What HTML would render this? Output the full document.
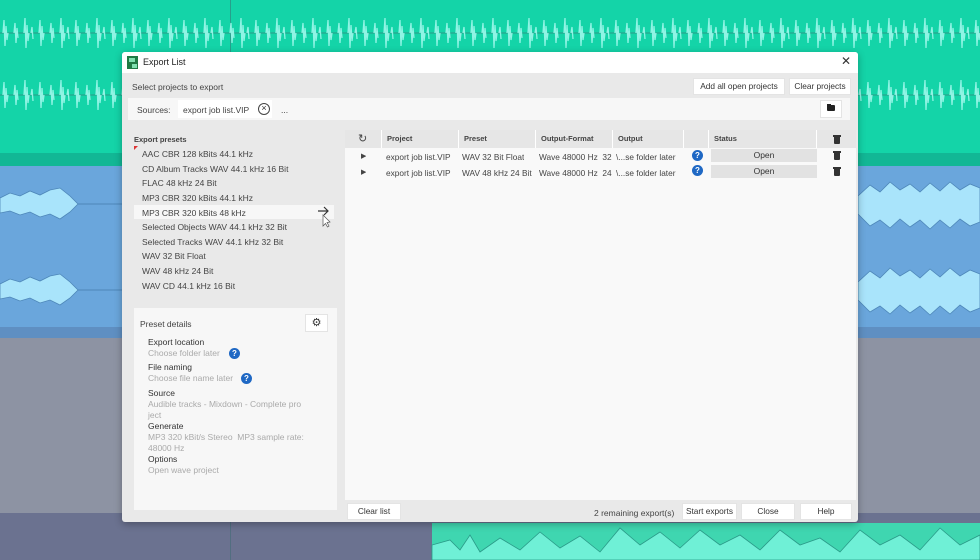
<!DOCTYPE html>
<html><head><meta charset="utf-8"><style>
*{margin:0;padding:0;box-sizing:border-box}
body{width:980px;height:560px;overflow:hidden;position:relative;font-family:"Liberation Sans",sans-serif;font-size:8.5px;color:#333;background:#8d93a3}
.a{position:absolute}
.btn{position:absolute;background:#fff;border:1px solid #e4e4e4;text-align:center;height:17px;line-height:15px;font-size:8.3px;color:#333}
.li{position:absolute;left:142px;font-size:8.5px;color:#444}
.th{position:absolute;top:130px;height:18px;line-height:18px;font-size:7.5px;font-weight:bold;color:#444;border-right:1px solid #fff;padding-left:5px}
.td{position:absolute;font-size:8.3px;color:#444;white-space:nowrap;overflow:hidden}
.q{position:absolute;width:11px;height:11px;border-radius:50%;background:#1f68c4;color:#fff;font-size:8px;font-weight:bold;text-align:center;line-height:11px}
.dh{position:absolute;left:148px;font-size:8.5px;color:#333}
.dv{position:absolute;left:148px;font-size:8.5px;color:#aaa}
.tr{position:absolute;width:6px;height:7px;background:#333;border-radius:0 0 1px 1px}
.tr:before{content:"";position:absolute;left:-1px;top:-2px;width:8px;height:1.5px;background:#333}
</style></head><body>
<div class="a" style="left:0;top:0;width:980px;height:153px;background:#14d4a8"></div>
<div class="a" style="left:0;top:153px;width:980px;height:13px;background:#12b795"></div>
<div class="a" style="left:0;top:166px;width:980px;height:161px;background:#6aa6dc"></div>
<div class="a" style="left:0;top:327px;width:980px;height:11px;background:#5f8fc2"></div>
<div class="a" style="left:0;top:513px;width:980px;height:47px;background:#6b7290"></div>
<div class="a" style="left:432px;top:523px;width:548px;height:37px;background:#3fd6b0"></div>
<div class="a" style="left:230px;top:0;width:1px;height:560px;background:#3a6a70;opacity:.5"></div>
<svg class="a" style="left:0;top:0" width="980" height="560">
<defs>
<pattern id="sp1" x="0" y="8" width="36" height="50" patternUnits="userSpaceOnUse">
<line x1="0" y1="25" x2="36" y2="25" stroke="#2a9a88" stroke-width="1"/>
<path d="M3 25 L4 12 L5 38 L6 18 L7 32 L8 25 M14 25 L15 15 L16 35 L17 20 L18 30 M24 25 L25 10 L26 40 L27 17 L28 33 L29 25 M31 25 L32 19 L33 31" stroke="#8ff4e4" stroke-width="1.3" fill="none"/>
</pattern>
<pattern id="sp2" x="0" y="70" width="36" height="50" patternUnits="userSpaceOnUse">
<line x1="0" y1="25" x2="36" y2="25" stroke="#2a9a88" stroke-width="1"/>
<path d="M3 25 L4 12 L5 38 L6 18 L7 32 L8 25 M14 25 L15 15 L16 35 L17 20 L18 30 M24 25 L25 10 L26 40 L27 17 L28 33 L29 25 M31 25 L32 19 L33 31" stroke="#8ff4e4" stroke-width="1.3" fill="none"/>
</pattern>
</defs>
<rect x="0" y="8" width="980" height="50" fill="url(#sp1)"/>
<rect x="0" y="70" width="980" height="50" fill="url(#sp2)"/>
<g fill="#a9e4fb" stroke="#4d86b8" stroke-width=".8">
<path d="M0 198 L10 193 L20 196 L30 191 L40 195 L50 190 L60 188 L70 196 L78 204 L70 212 L60 219 L50 214 L40 217 L30 212 L20 215 L10 211 L0 213Z"/>
<path d="M0 284 L10 279 L20 282 L30 277 L40 281 L50 276 L60 274 L70 282 L78 290 L70 298 L60 305 L50 300 L40 303 L30 298 L20 301 L10 297 L0 299Z"/>
<path d="M858 196 L870 185 L880 192 L890 182 L900 190 L910 184 L920 192 L930 183 L940 191 L950 182 L960 190 L970 184 L980 188 L980 222 L970 226 L960 219 L950 228 L940 220 L930 229 L920 220 L910 227 L900 219 L890 228 L880 220 L870 226 L858 214Z"/>
<path d="M858 282 L870 271 L880 278 L890 268 L900 276 L910 270 L920 278 L930 269 L940 277 L950 268 L960 276 L970 270 L980 274 L980 308 L970 312 L960 305 L950 314 L940 306 L930 315 L920 306 L910 313 L900 305 L890 314 L880 306 L870 312 L858 300Z"/>
</g>
<line x1="78" y1="204" x2="122" y2="204" stroke="#4d86b8"/>
<line x1="78" y1="290" x2="122" y2="290" stroke="#4d86b8"/>
<path d="M432 560 L432 545 L450 540 L460 550 L470 535 L480 552 L500 538 L520 550 L540 532 L560 548 L580 536 L600 552 L620 528 L640 545 L660 532 L680 548 L700 530 L720 545 L740 535 L760 550 L780 530 L800 545 L820 538 L840 552 L860 530 L880 545 L900 535 L920 550 L940 528 L960 545 L980 535 L980 560Z" fill="#6ff0d6" stroke="#2a9a88" stroke-width=".8"/>
</svg>

<div class="a" style="left:122px;top:52px;width:736px;height:470px;background:#e9e9e9;box-shadow:0 2px 8px rgba(0,0,0,.3);border-radius:3px;overflow:hidden">
<div class="a" style="left:0;top:0;width:736px;height:21px;background:#fff"></div>
</div>
<div class="a" style="left:127px;top:56px;width:11px;height:13px;background:#1f7a44"></div>
<div class="a" style="left:129px;top:58px;width:6px;height:4px;background:#7fe0b0"></div>
<div class="a" style="left:132px;top:64px;width:5px;height:4px;background:#7fe0b0"></div>
<div class="a" style="left:143px;top:57px;font-size:9px;color:#222">Export List</div>
<div class="a" style="left:841px;top:54px;font-size:12px;color:#333;font-weight:300">✕</div>
<div class="a" style="left:132px;top:82px;font-size:8.5px;color:#444">Select projects to export</div>
<div class="btn" style="left:693px;top:78px;width:92px">Add all open projects</div>
<div class="btn" style="left:789px;top:78px;width:62px">Clear projects</div>
<div class="a" style="left:128px;top:98px;width:722px;height:22px;background:#f7f7f7"></div>
<div class="a" style="left:137px;top:105px;color:#444">Sources:</div>
<div class="a" style="left:178px;top:100px;width:94px;height:18px;background:#fff"></div>
<div class="a" style="left:183px;top:105px;color:#444">export job list.VIP</div>
<div class="a" style="left:258px;top:103px;width:12px;height:12px;border:1.2px solid #444;border-radius:50%;font-size:9px;line-height:9px;text-align:center">×</div>
<div class="a" style="left:281px;top:105px">...</div>
<div class="btn" style="left:820px;top:100px;width:22px;height:18px"></div>
<div class="a" style="left:827px;top:105px;width:8px;height:6px;background:#222;border-radius:1px"></div>
<div class="a" style="left:827px;top:104px;width:4px;height:2px;background:#222"></div>

<div class="a" style="left:134px;top:135px;font-size:7.5px;font-weight:bold;color:#444">Export presets</div>
<div class="a" style="left:134px;top:146px;width:0;height:0;border-left:4px solid #d33;border-bottom:4px solid transparent"></div>
<div class="a" style="left:134px;top:205px;width:200px;height:14px;background:#f7f7f7"></div>
<div class="li" style="top:149px">AAC CBR 128 kBits 44.1 kHz</div>
<div class="li" style="top:164px">CD Album Tracks WAV 44.1 kHz 16 Bit</div>
<div class="li" style="top:178px">FLAC 48 kHz 24 Bit</div>
<div class="li" style="top:193px">MP3 CBR 320 kBits 44.1 kHz</div>
<div class="li" style="top:208px">MP3 CBR 320 kBits 48 kHz</div>
<div class="li" style="top:222px">Selected Objects WAV 44.1 kHz 32 Bit</div>
<div class="li" style="top:237px">Selected Tracks WAV 44.1 kHz 32 Bit</div>
<div class="li" style="top:251px">WAV 32 Bit Float</div>
<div class="li" style="top:266px">WAV 48 kHz 24 Bit</div>
<div class="li" style="top:281px">WAV CD 44.1 kHz 16 Bit</div>
<svg class="a" style="left:316px;top:204px" width="16" height="24"><path d="M2 7 H12 M8 3 L12 7 L8 11" stroke="#333" stroke-width="1.2" fill="none"/><path d="M7 11 L7 22 L9.5 19.5 L11.5 23 L13 22 L11 18.5 L14 18 Z" fill="#fff" stroke="#555" stroke-width=".7"/></svg>

<div class="a" style="left:134px;top:308px;width:203px;height:202px;background:#f7f7f7"></div>
<div class="a" style="left:140px;top:319px;color:#444">Preset details</div>
<div class="btn" style="left:305px;top:314px;width:23px;height:18px;font-size:11px;line-height:16px">⚙</div>
<div class="dh" style="top:337px">Export location</div>
<div class="dv" style="top:348px">Choose folder later</div><div class="q" style="left:229px;top:348px">?</div>
<div class="dh" style="top:362px">File naming</div>
<div class="dv" style="top:373px">Choose file name later</div><div class="q" style="left:241px;top:373px">?</div>
<div class="dh" style="top:388px">Source</div>
<div class="dv" style="top:399px">Audible tracks - Mixdown - Complete pro</div>
<div class="dv" style="top:410px">ject</div>
<div class="dh" style="top:421px">Generate</div>
<div class="dv" style="top:432px">MP3 320 kBit/s Stereo &nbsp;MP3 sample rate:</div>
<div class="dv" style="top:443px">48000 Hz</div>
<div class="dh" style="top:454px">Options</div>
<div class="dv" style="top:465px">Open wave project</div>

<div class="a" style="left:345px;top:130px;width:511px;height:370px;background:#f9f9f9"></div>
<div class="a" style="left:345px;top:130px;width:511px;height:18px;background:#e6e6e6"></div>
<div class="th" style="left:345px;width:37px;font-size:11px;font-weight:normal;padding-left:13px">↻</div>
<div class="th" style="left:382px;width:77px">Project</div>
<div class="th" style="left:459px;width:77px">Preset</div>
<div class="th" style="left:536px;width:77px">Output-Format</div>
<div class="th" style="left:613px;width:71px">Output</div>
<div class="th" style="left:684px;width:25px"></div>
<div class="th" style="left:709px;width:108px">Status</div>
<div class="th" style="left:817px;width:39px;border:none"></div>
<div class="tr" style="left:834px;top:137px"></div>
<div class="td" style="left:361px;top:152px;font-size:7px">▶</div>
<div class="td" style="left:386px;top:152px">export job list.VIP</div>
<div class="td" style="left:462px;top:152px">WAV 32 Bit Float</div>
<div class="td" style="left:539px;top:152px;width:73px">Wave 48000 Hz &nbsp;32</div>
<div class="td" style="left:616px;top:152px">\...se folder later</div>
<div class="q" style="left:692px;top:150px">?</div>
<div class="a" style="left:711px;top:149px;width:106px;height:13px;background:#e2e2e2;text-align:center;line-height:13px;color:#333">Open</div>
<div class="tr" style="left:834px;top:153px"></div>
<div class="td" style="left:361px;top:168px;font-size:7px">▶</div>
<div class="td" style="left:386px;top:168px">export job list.VIP</div>
<div class="td" style="left:462px;top:168px">WAV 48 kHz 24 Bit</div>
<div class="td" style="left:539px;top:168px;width:73px">Wave 48000 Hz &nbsp;24</div>
<div class="td" style="left:616px;top:168px">\...se folder later</div>
<div class="q" style="left:692px;top:165px">?</div>
<div class="a" style="left:711px;top:165px;width:106px;height:13px;background:#e2e2e2;text-align:center;line-height:13px;color:#333">Open</div>
<div class="tr" style="left:834px;top:169px"></div>

<div class="btn" style="left:347px;top:503px;width:54px">Clear list</div>
<div class="a" style="left:594px;top:508px;color:#444">2 remaining export(s)</div>
<div class="btn" style="left:682px;top:503px;width:55px">Start exports</div>
<div class="btn" style="left:741px;top:503px;width:54px">Close</div>
<div class="btn" style="left:800px;top:503px;width:52px">Help</div>
</body></html>
